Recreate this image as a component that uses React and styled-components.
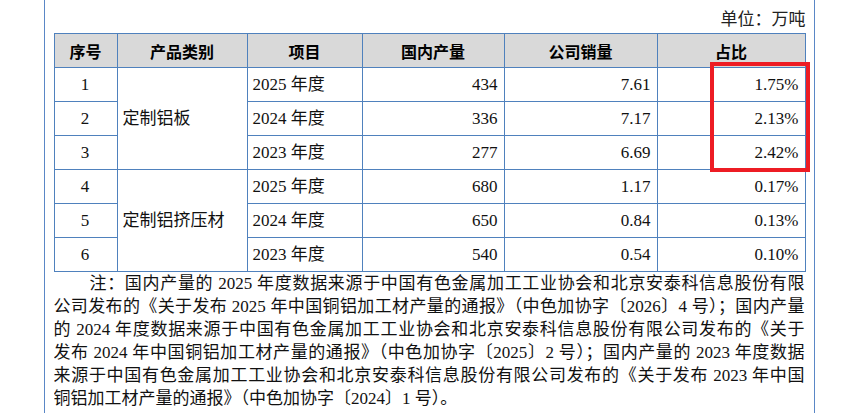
import React from 'react'
import styled, { createGlobalStyle } from 'styled-components'

const rows = [
	{ no: 1, year: '2025 年度', output: '434', sales: '7.61', ratio: '1.75%' },
	{ no: 2, year: '2024 年度', output: '336', sales: '7.17', ratio: '2.13%' },
	{ no: 3, year: '2023 年度', output: '277', sales: '6.69', ratio: '2.42%' },
	{ no: 4, year: '2025 年度', output: '680', sales: '1.17', ratio: '0.17%' },
	{ no: 5, year: '2024 年度', output: '650', sales: '0.84', ratio: '0.13%' },
	{ no: 6, year: '2023 年度', output: '540', sales: '0.54', ratio: '0.10%' },
]

const groups = { 1: '定制铝板', 4: '定制铝挤压材' }

const noteLines = [
	'注：国内产量的 2025 年度数据来源于中国有色金属加工工业协会和北京安泰科信息股份有限',
	'公司发布的《关于发布 2025 年中国铜铝加工材产量的通报》（中色加协字〔2026〕4 号）；国内产量',
	'的 2024 年度数据来源于中国有色金属加工工业协会和北京安泰科信息股份有限公司发布的《关于',
	'发布 2024 年中国铜铝加工材产量的通报》（中色加协字〔2025〕2 号）；国内产量的 2023 年度数据',
	'来源于中国有色金属加工工业协会和北京安泰科信息股份有限公司发布的《关于发布 2023 年中国',
	'铜铝加工材产量的通报》（中色加协字〔2024〕1 号）。',
]

export default function App() {
	return (
		<>
			<GlobalStyle />
			<Page>
				<Frame>
					<Unit>单位：万吨</Unit>
					<TableWrap>
						<Table>
							<colgroup>
								<col style={{ width: 63 }} />
								<col style={{ width: 130 }} />
								<col style={{ width: 115 }} />
								<col style={{ width: 142 }} />
								<col style={{ width: 153 }} />
								<col style={{ width: 148 }} />
							</colgroup>
							<thead>
								<tr>
									<Th>序号</Th>
									<Th>产品类别</Th>
									<Th>项目</Th>
									<Th>国内产量</Th>
									<Th>公司销量</Th>
									<Th>占比</Th>
								</tr>
							</thead>
							<tbody>
								{rows.map(r => (
									<tr key={r.no}>
										<Td $align="center">{r.no}</Td>
										{groups[r.no] && <Td rowSpan={3}>{groups[r.no]}</Td>}
										<Td>{r.year}</Td>
										<Td $align="right">{r.output}</Td>
										<Td $align="right">{r.sales}</Td>
										<Td $align="right">{r.ratio}</Td>
									</tr>
								))}
							</tbody>
						</Table>
						<Highlight />
					</TableWrap>
					<Note>
						{noteLines.map((line, i) => (
							<NoteLine key={i} $first={i === 0} $last={i === noteLines.length - 1}>{line}</NoteLine>
						))}
					</Note>
				</Frame>
			</Page>
		</>
	)
}

const GlobalStyle = createGlobalStyle`
	html, body {
		margin: 0;
		background: #fff;
	}
	body {
		font-family: "Liberation Serif", "Noto Sans CJK SC", serif;
		color: #000;
	}
`

const Page = styled.div`
	width: 851px;
	height: 413px;
	overflow: hidden;
	padding-left: 44px;
	box-sizing: border-box;
`

const Frame = styled.div`
	width: 771px;
	height: 413px;
	box-sizing: border-box;
	border-left: 1.5px solid #5a87c6;
	border-right: 1.5px solid #5a87c6;
	padding: 0 8.5px 0 8.5px;
`

const Unit = styled.div`
	height: 33px;
	display: flex;
	align-items: flex-end;
	justify-content: flex-end;
	padding-bottom: 5px;
	box-sizing: border-box;
	font-size: 17px;
	line-height: 1;
	color: #222;
`

const TableWrap = styled.div`
	position: relative;
	width: 751px;
`

const Table = styled.table`
	width: 751px;
	border-collapse: collapse;
	table-layout: fixed;
	font-size: 17px;
`

const Th = styled.th`
	height: 33px;
	padding: 0;
	background: #d9d9d9;
	border: 1px solid #4f81bd;
	font-family: "Noto Sans CJK SC", sans-serif;
	font-weight: 700;
	font-size: 16px;
	text-align: center;
	color: #000;
`

const Td = styled.td`
	height: 33px;
	padding: 0 6px 0 5px;
	border: 1px solid #4f81bd;
	text-align: ${p => p.$align || 'left'};
	line-height: 1;
	color: #111;
`

const Highlight = styled.div`
	position: absolute;
	left: 656px;
	top: 29px;
	width: 100px;
	height: 110px;
	box-sizing: border-box;
	border: 4px solid #ed1c24;
	pointer-events: none;
`

const Note = styled.div`
	width: 751px;
	font-size: 17px;
	line-height: 23px;
	color: #111;
`

const NoteLine = styled.div`
	text-align: ${p => (p.$last ? 'left' : 'justify')};
	text-align-last: ${p => (p.$last ? 'left' : 'justify')};
	text-indent: ${p => (p.$first ? '36px' : '0')};
	white-space: ${p => (p.$last ? 'nowrap' : 'normal')};
	overflow: hidden;
	height: 23px;
`
